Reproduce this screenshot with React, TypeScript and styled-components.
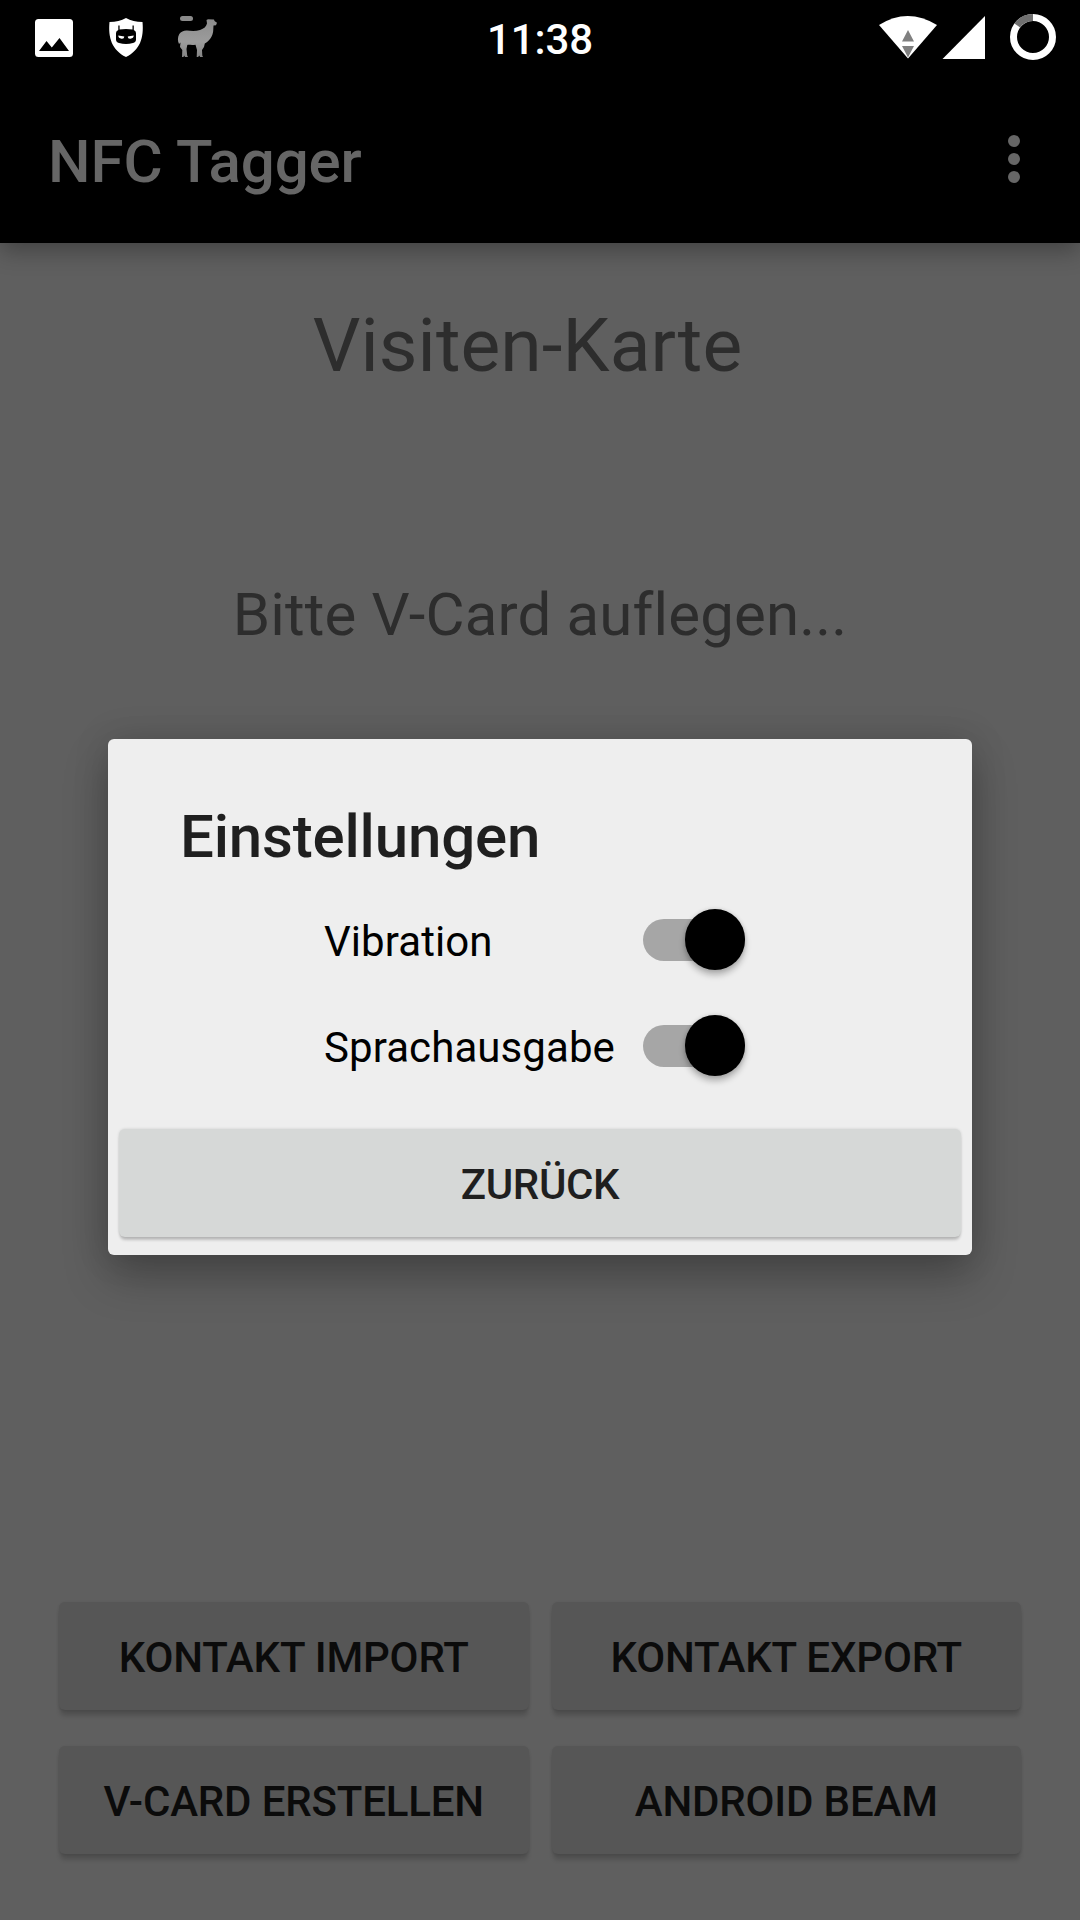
import React from "react";
import styled, { createGlobalStyle } from "styled-components";

const Global = createGlobalStyle`
  html, body { margin: 0; padding: 0; background: #5f5f5f; }
  * { box-sizing: border-box; }
`;

const Screen = styled.div`
  position: relative;
  width: 1080px;
  height: 1920px;
  overflow: hidden;
  display: flex;
  flex-direction: column;
  background: #5f5f5f;
  font-family: Roboto, "Noto Sans", sans-serif;
`;

const StatusBar = styled.header`
  display: grid;
  grid-template-columns: 1fr auto 1fr;
  height: 75px;
  background: #000;
  z-index: 1;
`;

const Clock = styled.time`
  color: #fff;
  font-size: 42px;
  font-weight: 500;
  line-height: 49px;
  letter-spacing: -0.15px;
  padding-top: 15px;
`;

const IconGroup = styled.div<{ $end?: boolean }>`
  display: flex;
  justify-content: ${(p) => (p.$end ? "flex-end" : "flex-start")};
`;

const AppBar = styled.div`
  display: flex;
  align-items: center;
  justify-content: space-between;
  height: 168px;
  padding: 0 60px 0 48px;
  background: #000;
  box-shadow: 0 8px 22px rgba(0, 0, 0, 0.3);
  z-index: 1;
`;

const AppTitle = styled.h1`
  margin: 0;
  padding-top: 5px;
  color: #666;
  font-size: 60px;
  font-weight: 500;
  line-height: 70px;
  letter-spacing: -0.1px;
`;

const MenuButton = styled.button`
  display: flex;
  flex-direction: column;
  gap: 6px;
  padding: 0;
  border: 0;
  background: none;
`;

const Dot = styled.span`
  width: 12px;
  height: 12px;
  border-radius: 50%;
  background: #666;
`;

const Content = styled.main`
  flex: 1;
  display: flex;
  flex-direction: column;
  align-items: center;
  padding: 58px 59px 66px;
  color: #2d2d2d;
`;

const Heading = styled.h2`
  margin: 0;
  padding-right: 25px;
  font-size: 75px;
  font-weight: 400;
  line-height: 88px;
  letter-spacing: 0.06px;
`;

const Prompt = styled.p`
  margin: 191px 0 0;
  font-size: 60px;
  font-weight: 400;
  line-height: 70px;
  letter-spacing: 0.15px;
  font-variant-ligatures: none;
`;

const ButtonGrid = styled.div`
  display: grid;
  grid-template-columns: 1fr 1fr;
  gap: 36px 23px;
  width: 100%;
  margin-top: auto;
`;

const Button = styled.button<{ $dimmed?: boolean }>`
  height: 108px;
  padding: 3px 0 0;
  border: 0;
  border-radius: 6px;
  background: ${(p) => (p.$dimmed ? "#565656" : "#d6d8d7")};
  color: ${(p) => (p.$dimmed ? "#0b0b0b" : "#1f1f1f")};
  box-shadow: ${(p) =>
    p.$dimmed
      ? "0 7px 4px -1px rgba(0,0,0,.15), 0 1px 3px rgba(0,0,0,.12)"
      : "0 4px 3px -1px rgba(0,0,0,.2), 0 0 3px rgba(0,0,0,.14)"};
  font-family: inherit;
  font-size: 42px;
  font-weight: 500;
  line-height: 49px;
  letter-spacing: -0.16px;
`;

const Overlay = styled.div`
  position: absolute;
  inset: 0;
  z-index: 2;
  display: flex;
  justify-content: center;
  align-items: flex-start;
  padding-top: 739px;
`;

const Dialog = styled.section`
  display: flex;
  flex-direction: column;
  width: 864px;
  height: 516px;
  padding: 63px 11px 18px;
  border-radius: 6px;
  background: #eee;
  box-shadow: 0 22px 44px rgba(0, 0, 0, 0.26), 0 0 36px rgba(0, 0, 0, 0.13);
`;

const DialogTitle = styled.h2`
  margin: 0 0 25px 61px;
  color: #1f1f1f;
  font-size: 60px;
  font-weight: 500;
  line-height: 70px;
  letter-spacing: -0.18px;
`;

const Options = styled.div`
  display: flex;
  flex-direction: column;
  width: 421px;
  margin-left: 205px;
`;

const Option = styled.label`
  display: flex;
  align-items: center;
  justify-content: space-between;
  height: 106px;
  padding-bottom: 21px;
  color: #000;
  font-size: 42px;
  line-height: 49px;
  letter-spacing: 0.08px;
`;

const OptionLabel = styled.span`
  padding-top: 4px;
`;

const Track = styled.span`
  display: flex;
  align-items: center;
  justify-content: flex-end;
  width: 102px;
  height: 42px;
  margin-top: 1px;
  border-radius: 21px;
  background: #a6a6a6;
`;

const Thumb = styled.span`
  flex: none;
  width: 60.5px;
  height: 60.5px;
  margin-bottom: 1px;
  border-radius: 50%;
  background: #000;
  box-shadow: 0 5px 6px rgba(0, 0, 0, 0.26), 0 0 4px rgba(0, 0, 0, 0.14);
`;

const DialogButton = styled(Button)`
  margin-top: auto;
  width: 842px;
  letter-spacing: -0.35px;
`;

const Switch = ({ label }: { label: string }) => (
  <Option>
    <OptionLabel>{label}</OptionLabel>
    <Track role="switch" aria-checked="true">
      <Thumb />
    </Track>
  </Option>
);

const NotificationIcons = () => (
  <svg width="240" height="75" viewBox="0 0 240 75">
    <defs>
      <linearGradient id="fur" x1="0" y1="0" x2="0" y2="1">
        <stop offset="0" stopColor="#8c8c8c" />
        <stop offset="0.6" stopColor="#9c9c9c" />
        <stop offset="1" stopColor="#858585" />
      </linearGradient>
    </defs>
    <path
      fill="#fff"
      fillRule="evenodd"
      d="M38.500 19H69.500Q73 19 73 22.500V53.500Q73 57 69.500 57H38.500Q35 57 35 53.500V22.500Q35 19 38.500 19ZM39 51H69L59.500 38L51.800 47.500L46.500 41Z"
    />
    <path
      fill="#fff"
      d="M126 18Q133 22 142.500 22C144 38 140 50 126 57C112 50 108 38 109.500 22Q119 22 126 18Z"
    />
    <path
      fill="#000"
      d="M118.300 25.500H119.600V29.500Q126 28.500 132.500 29.500V25.500H133.800V30Q136 31 136 33V39.500Q136 42 133 43Q126 45 119 43Q116 42 116 39.500V33Q116 31 118.300 30Z"
    />
    <path
      fill="#fff"
      d="M118.300 35.500L124.300 36.500Q124.300 39 121.500 38.700Q118.300 38.300 118.300 35.500ZM133.700 35.500L127.700 36.500Q127.700 39 130.500 38.700Q133.700 38.300 133.700 35.500Z"
    />
    <rect x="180" y="16" width="13" height="5" rx="2.500" fill="#8b8b8b" />
    <path
      fill="url(#fur)"
      d="M206.500 20L208 19.300L214 19.500L214.500 21L217 22.800L216 25.200L213.500 25.500L213.200 31C212.800 36 209.500 41 204.800 43.500L204 47L202 50L202.300 55.500L203 57H200L199.500 55.500L198 57H196.700L197 50L195.500 44.800C191.500 45.500 188.500 44.500 187.300 45L186.500 49L187.200 55.500L188 57H185L184.200 55.500L183.500 57H182L182.300 50L180 47L180.500 42.500L179 44C177.500 41 177.500 37 179.300 34C181 31.500 184 30.300 187 30.500C191 31 196 31.300 200 30C204 28.700 206.300 26.500 207 23.500Z"
    />
  </svg>
);

const SystemIcons = () => (
  <svg width="220" height="75" viewBox="0 0 220 75">
    <path fill="#fff" d="M19 25Q47.500 7 77 25L48 58.500Z" />
    <path fill="#808080" d="M48 30L54 41.500H42ZM42 46H54L48 57.500Z" />
    <path fill="#fff" d="M125 16V59H82.500Z" />
    <circle cx="173" cy="37" r="19.500" fill="none" stroke="#fff" strokeWidth="7" />
    <path d="M157.200 25.500A19.500 19.500 0 0 1 173 17.500" fill="none" stroke="#707070" strokeWidth="7" />
  </svg>
);

export default function App() {
  return (
    <>
      <Global />
      <Screen>
        <StatusBar>
          <IconGroup>
            <NotificationIcons />
          </IconGroup>
          <Clock>11:38</Clock>
          <IconGroup $end>
            <SystemIcons />
          </IconGroup>
        </StatusBar>
        <AppBar>
          <AppTitle>NFC Tagger</AppTitle>
          <MenuButton aria-label="Menü">
            <Dot />
            <Dot />
            <Dot />
          </MenuButton>
        </AppBar>
        <Content>
          <Heading>Visiten-Karte</Heading>
          <Prompt>Bitte V-Card auflegen...</Prompt>
          <ButtonGrid>
            <Button $dimmed>KONTAKT IMPORT</Button>
            <Button $dimmed>KONTAKT EXPORT</Button>
            <Button $dimmed>V-CARD ERSTELLEN</Button>
            <Button $dimmed>ANDROID BEAM</Button>
          </ButtonGrid>
        </Content>
        <Overlay>
          <Dialog role="dialog">
            <DialogTitle>Einstellungen</DialogTitle>
            <Options>
              <Switch label="Vibration" />
              <Switch label="Sprachausgabe" />
            </Options>
            <DialogButton>ZURÜCK</DialogButton>
          </Dialog>
        </Overlay>
      </Screen>
    </>
  );
}
